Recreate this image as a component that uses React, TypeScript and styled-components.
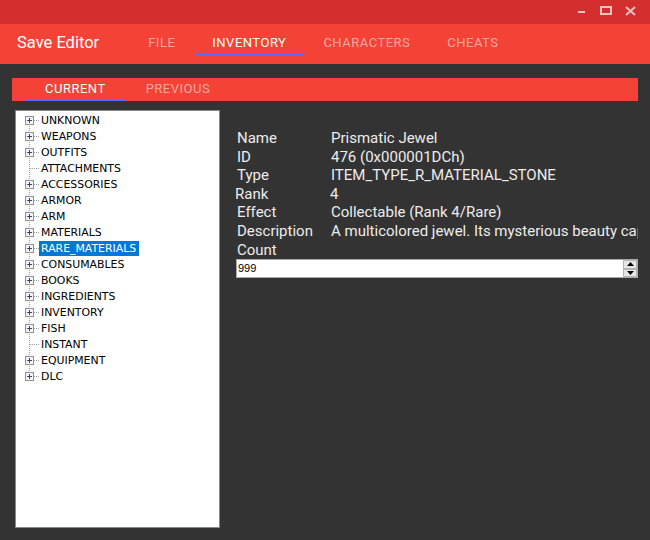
import { styled, createGlobalStyle } from 'styled-components';

const GlobalStyle = createGlobalStyle`
  html, body {
    margin: 0;
    padding: 0;
    background: #333333;
    overflow: hidden;
  }
  * { box-sizing: border-box; }
`;

const tabs = ['FILE', 'INVENTORY', 'CHARACTERS', 'CHEATS'];
const subTabs = ['CURRENT', 'PREVIOUS'];

interface TreeEntry {
  label: string;
  expandable: boolean;
}

const treeItems: TreeEntry[] = [
  { label: 'UNKNOWN', expandable: true },
  { label: 'WEAPONS', expandable: true },
  { label: 'OUTFITS', expandable: true },
  { label: 'ATTACHMENTS', expandable: false },
  { label: 'ACCESSORIES', expandable: true },
  { label: 'ARMOR', expandable: true },
  { label: 'ARM', expandable: true },
  { label: 'MATERIALS', expandable: true },
  { label: 'RARE_MATERIALS', expandable: true },
  { label: 'CONSUMABLES', expandable: true },
  { label: 'BOOKS', expandable: true },
  { label: 'INGREDIENTS', expandable: true },
  { label: 'INVENTORY', expandable: true },
  { label: 'FISH', expandable: true },
  { label: 'INSTANT', expandable: false },
  { label: 'EQUIPMENT', expandable: true },
  { label: 'DLC', expandable: true },
];

const details = [
  ['Name', 'Prismatic Jewel'],
  ['ID', '476 (0x000001DCh)'],
  ['Type', 'ITEM_TYPE_R_MATERIAL_STONE'],
  ['Rank', '4'],
  ['Effect', 'Collectable (Rank 4/Rare)'],
  ['Description', 'A multicolored jewel. Its mysterious beauty captivates all who see it.'],
];

const Connector = ({ expandable, first, last }: { expandable: boolean; first: boolean; last: boolean }) => (
  <svg width="16" height="16" viewBox="0 0 16 16" shapeRendering="crispEdges">
    <line
      x1="4.5" y1={first ? 8 : 0} x2="4.5" y2={last ? 8 : 16}
      stroke="#a0a0a0" strokeWidth="1" strokeDasharray="1 1"
    />
    <line x1={expandable ? 9 : 5} y1="8.5" x2="14" y2="8.5" stroke="#a0a0a0" strokeDasharray="1 1" />
    {expandable && (
      <g>
        <rect x="0.5" y="4.5" width="8" height="8" fill="#f4f4f4" stroke="#919191" />
        <line x1="2" y1="8.5" x2="7" y2="8.5" stroke="#2b4a83" />
        <line x1="4.5" y1="6" x2="4.5" y2="11" stroke="#2b4a83" />
      </g>
    )}
  </svg>
);

const App = () => {
  return (
    <Window>
      <GlobalStyle />
      <TitleBar>
        <WindowButton>
          <svg width="10" height="10" viewBox="0 0 10 10">
            <rect x="1" y="5" width="7" height="2" fill="currentColor" />
          </svg>
        </WindowButton>
        <WindowButton>
          <svg width="12" height="10" viewBox="0 0 12 10">
            <rect x="1" y="1" width="10" height="7" fill="none" stroke="currentColor" strokeWidth="2" />
          </svg>
        </WindowButton>
        <WindowButton>
          <svg width="11" height="10" viewBox="0 0 11 10">
            <path d="M1 1 L10 9 M10 1 L1 9" stroke="currentColor" strokeWidth="2" />
          </svg>
        </WindowButton>
      </TitleBar>

      <Header>
        <AppTitle>Save Editor</AppTitle>
        <TabList>
          {tabs.map((t) => (
            <Tab key={t} $active={t === 'INVENTORY'}>{t}</Tab>
          ))}
        </TabList>
      </Header>

      <SubTabBar>
        {subTabs.map((t) => (
          <SubTab key={t} $active={t === 'CURRENT'}>{t}</SubTab>
        ))}
      </SubTabBar>

      <Main>
        <TreeBox>
          {treeItems.map((item, i) => (
            <TreeRow key={item.label}>
              <Connector
                expandable={item.expandable}
                first={i === 0}
                last={i === treeItems.length - 1}
              />
              <TreeLabel $selected={item.label === 'RARE_MATERIALS'}>{item.label}</TreeLabel>
            </TreeRow>
          ))}
        </TreeBox>

        <Details>
          <InfoGrid>
            {details.map(([k, v]) => (
              <InfoRow key={k}>
                <InfoLabel $nudge={k === 'Rank'}>{k}</InfoLabel>
                <InfoValue>{v}</InfoValue>
              </InfoRow>
            ))}
            <InfoRow>
              <InfoLabel>Count</InfoLabel>
            </InfoRow>
          </InfoGrid>
          <SpinBox>
            <SpinText>999</SpinText>
            <SpinButtons>
              <SpinButton>
                <svg width="7" height="4" viewBox="0 0 7 4"><path d="M0 4 L3.5 0 L7 4 Z" fill="#000" /></svg>
              </SpinButton>
              <SpinButton>
                <svg width="7" height="4" viewBox="0 0 7 4"><path d="M0 0 L7 0 L3.5 4 Z" fill="#000" /></svg>
              </SpinButton>
            </SpinButtons>
          </SpinBox>
        </Details>
      </Main>
    </Window>
  );
};

const Window = styled.div`
  width: 650px;
  height: 540px;
  display: flex;
  flex-direction: column;
  background: #333333;
  font-family: Roboto, "Liberation Sans", sans-serif;
`;

const TitleBar = styled.div`
  height: 24px;
  flex-shrink: 0;
  background: #d32f2f;
  display: flex;
  justify-content: flex-end;
  align-items: center;
  padding: 0 8px 2px 0;
`;

const WindowButton = styled.div`
  width: 24px;
  height: 20px;
  display: flex;
  align-items: center;
  justify-content: center;
  color: rgba(255, 255, 255, 0.7);
`;

const Header = styled.div`
  height: 40px;
  flex-shrink: 0;
  background: #f44336;
  display: flex;
  align-items: flex-start;
  padding: 8px 0 0 17px;
`;

const AppTitle = styled.div`
  font-size: 16.5px;
  line-height: 21px;
  color: #fff;
  margin-right: 32px;
`;

const TabList = styled.div`
  display: flex;
  gap: 3px;
`;

const Tab = styled.div<{ $active?: boolean }>`
  height: 23px;
  line-height: 21px;
  padding: 0 17px;
  font-size: 13px;
  letter-spacing: 0.5px;
  color: ${({ $active }) => ($active ? '#fff' : 'rgba(255, 255, 255, 0.55)')};
  border-bottom: 2px solid ${({ $active }) => ($active ? '#536dfe' : 'transparent')};
`;

const SubTabBar = styled.div`
  margin: 14px 12px 0;
  height: 23px;
  flex-shrink: 0;
  background: #f44336;
  display: flex;
  gap: 2px;
  padding-left: 14px;
`;

const SubTab = styled(Tab)`
  padding: 0 19px;
`;

const Main = styled.div`
  flex: 1;
  min-height: 0;
  display: flex;
  margin-top: 9px;
  padding: 0 12px 12px 15px;
`;

const TreeBox = styled.div`
  width: 205px;
  flex-shrink: 0;
  background: #fff;
  border: 1px solid #828790;
  padding: 1px 0 0 9px;
`;

const TreeRow = styled.div`
  height: 16px;
  display: flex;
  align-items: center;
`;

const TreeLabel = styled.span<{ $selected?: boolean }>`
  font-family: "DejaVu Sans", Verdana, sans-serif;
  font-size: 10.9px;
  line-height: 15px;
  padding: 0 3px 0 2px;
  margin-left: -2px;
  color: ${({ $selected }) => ($selected ? '#fff' : '#000')};
  background: ${({ $selected }) => ($selected ? '#0078d7' : 'transparent')};
`;

const Details = styled.div`
  flex: 1;
  min-width: 0;
  margin-left: 16px;
  padding-top: 19px;
  overflow: hidden;
`;

const InfoGrid = styled.div`
  display: flex;
  flex-direction: column;
`;

const InfoRow = styled.div`
  display: flex;
  height: 18.6px;
  font-size: 15px;
  line-height: 18.6px;
  white-space: nowrap;
`;

const InfoLabel = styled.div<{ $nudge?: boolean }>`
  width: 95px;
  flex-shrink: 0;
  padding-left: ${({ $nudge }) => ($nudge ? '0' : '1px')};
  margin-left: ${({ $nudge }) => ($nudge ? '-1px' : '0')};
  color: #ececec;
`;

const InfoValue = styled.div`
  color: #ececec;
`;

const SpinBox = styled.div`
  height: 19px;
  background: #fff;
  border: 1px solid #a9a9a9;
  display: flex;
  align-items: stretch;
`;

const SpinText = styled.div`
  flex: 1;
  font-family: "Liberation Sans", Arial, sans-serif;
  font-size: 11px;
  line-height: 17px;
  padding-left: 1px;
  color: #000;
`;

const SpinButtons = styled.div`
  width: 14px;
  display: flex;
  flex-direction: column;
`;

const SpinButton = styled.div`
  flex: 1;
  background: #e6e6e6;
  border: 1px solid #b5b5b5;
  display: flex;
  align-items: center;
  justify-content: center;
`;

export default App;
